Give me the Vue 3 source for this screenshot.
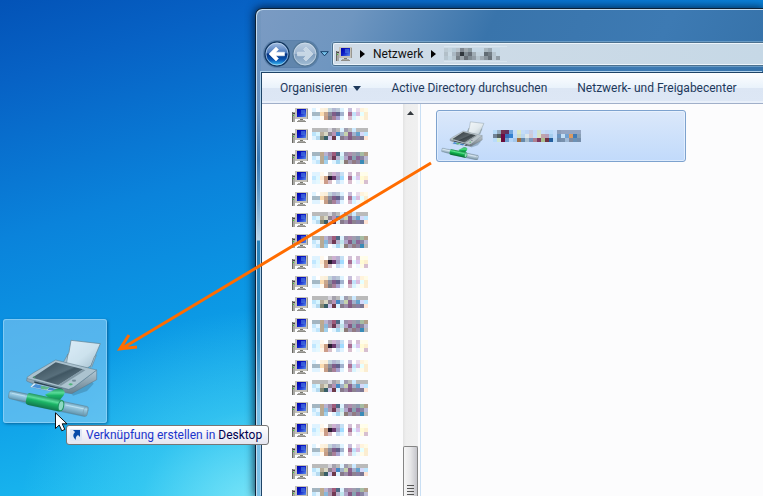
<script setup>
const palettes = [
  {
    top: 4,
    cells: [
      '#dff3ff #ffffff #fcf2df #fbefd9 #c3d5dc #b3b7d2 #b9c6d6 #def3ff #ffffff #c9bedb #ffffff #e8dcec #fff3dc #fffbe6',
      '#a4b8c5 #a5b9c5 #fbdcb0 #c7a78e #8b8c9c #7f5d88 #62628c #a2b2ce #ffffff #ab7398 #c3e2fa #dabde0 #e6ffff #fcedcf',
      '#dff3ff #e0f3ff #fffaf1 #c69d86 #817d82 #a88099 #a7a3d0 #dff3ff #ffffff #d7b9cb #d9f5ff #f3f9fa #fffbe7 #fbedd2'
    ]
  },
  {
    top: 3,
    cells: [
      '#bababa #bababa #bababa #bababa #d6d4dc #a4a1ac #bababa #dff3ff #a09dae #bababa #cbe9ff #bababa #bababa #bababa',
      '#bbe4fb #d7f5ff #b8ae9b #d8d7c4 #8c8290 #b893b4 #4589c5 #a2b3cb #c6d2ac #8b6390 #a3b1cc #64a1cb #d5d9f9 #bce7ff',
      '#dff3ff #b5daf0 #858a76 #385e66 #d0c7ee #6d3a49 #dff3ff #877a8b #9d8faa #835c83 #8c8290 #8a80a2 #7d7893 #ffe4d3'
    ]
  },
  {
    top: 6,
    cells: [
      '#a4b5c0 #a4b5c0 #bda98f #b8b3d1 #a08cab #9f5b7b #4f6985 #def3ff #9b91ad #ad8fae #a09dae #8d9bae #a6bca3 #b2a08b',
      '#c3e6fb #e5f5ff #b8aa94 #88b8dc #ad96ad #713a55 #b8b4ce #bfe5ec #b1a5ca #845985 #87a2b1 #8c6797 #8985a4 #bab9d4',
      '#dff3ff #c0e5fb #b8aa94 #a2d0ed #ffffff #dff3ff #a4d5f0 #ddf0ed #8c7a77 #a199b0 #927b84 #9187a2 #398bb7 #bababa'
    ]
  },
  {
    top: 5,
    cells: [
      '#dff3ff #dff3ff #fff8ed #ffffff #bab6ba #ceb0d1 #b6afd0 #c6e0f4 #ffffff #d4bfd6 #ffffff #d4bed5 #fffdeb #fffde9',
      '#c0e7ff #dff8ff #ffe9d2 #c89d81 #281c32 #6d3b70 #a09fc6 #a2dcff #ffffff #a96f95 #e2f5ff #dbc5ef #fffbd4 #fdefd0',
      '#dff3ff #e5f8ff #fff6e9 #cd9c89 #d8bdc8 #ffffff #c6dbf2 #dff3ff #ffffff #d9bdce #ffffff #f0f9ff #fffbe5 #d7bfd0'
    ]
  }
]

function toPixels(rows, top) {
  return rows.flatMap((row, y) =>
    row.split(' ').map((fill, x) => ({ x: x * 4, y: top + y * 4, fill }))
  )
}

const hosts = Array.from({ length: 19 }, (_, i) => {
  const p = palettes[i % 4]
  return { id: i, pixels: toPixels(p.cells, p.top) }
})

const deviceLabel = toPixels(
  [
    '#b5daf8 #93aabf #733352 #61335f #6fa6dd #c4ddfb #d9e7c8 #c4dcf8 #bfd6f6 #c8cde2 #c4dcfa #d2e3d0 #c6dcf8 #bfd6f4 #b9dbf9 #c4dcfa #8c9eba #94a5c2 #94a5c2 #94a5c2 #94a5c2 #94a5c2',
    '#708295 #515e60 #6f0c42 #386fb8 #3281d0 #bfdcfb #cddccb #b9d6f1 #dce6ea #d0cad6 #c3defa #d7e3c8 #bfa5a9 #b69fb9 #a5ceef #c4dcfa #6b95c0 #c2def5 #72a2d2 #da9a62 #407bb7 #889fb4',
    '#b9dcfb #d1e8cc #680c3d #6c9cce #b6d6f8 #a4c8eb #a36f42 #6689aa #a9bfd0 #7795bb #ad8090 #80375f #a8bd8c #6f3142 #245f9f #b9d9f6 #748dab #7891ae #a0bad7 #808ba1 #6c91b5 #748dab'
  ],
  0
)

const pathLabel = toPixels(
  [
    '#bdcbd4 #c3d3dd #b8cbd6 #b8c2ca #7e8790 #9fa8ae #8b9aa1 #c5d7e4 #c5d7e4 #c5d7e4 #a9b7bf #9ba9b3 #c5d7e4 #c5d7e4',
    '#b2bfc8 #cad9e3 #aab8c3 #8a9299 #30373c #7e8a91 #666e77 #9facb4 #c1d1dc #c3d3df #616c74 #727d85 #b5c4ce #c5d7e4',
    '#b7c6d0 #c2d3de #b5c4cd #788188 #9aa3a9 #666d74 #808c93 #929da6 #b5c4cd #a1acb4 #8a959d #68727a #b9c7d1 #909ca5'
  ],
  0
)
</script>

<template>
  <main class="desktop">
    <svg class="defs" width="0" height="0" aria-hidden="true">
      <defs>
        <linearGradient id="paper" x1="0" y1="0" x2="1" y2="1">
          <stop offset="0" stop-color="#f3f7fa" /><stop offset="0.55" stop-color="#e2eaee" /><stop offset="1" stop-color="#aebdc5" />
        </linearGradient>
        <linearGradient id="lid" x1="0" y1="0" x2="1" y2="1">
          <stop offset="0" stop-color="#2b3236" /><stop offset="0.5" stop-color="#596368" /><stop offset="0.55" stop-color="#3d464b" /><stop offset="1" stop-color="#788287" />
        </linearGradient>
        <linearGradient id="side" x1="0" y1="0" x2="0" y2="1">
          <stop offset="0" stop-color="#c5cdd2" /><stop offset="1" stop-color="#69757d" />
        </linearGradient>
        <linearGradient id="green" x1="0" y1="0" x2="0" y2="1">
          <stop offset="0" stop-color="#168d45" /><stop offset="0.3" stop-color="#5be28b" /><stop offset="0.5" stop-color="#12b44f" /><stop offset="1" stop-color="#066b31" />
        </linearGradient>
        <linearGradient id="glass" x1="0" y1="0" x2="0" y2="1">
          <stop offset="0" stop-color="#81959d" /><stop offset="0.3" stop-color="#d6e5ea" /><stop offset="0.65" stop-color="#9eb4bd" /><stop offset="1" stop-color="#6e848e" />
        </linearGradient>
        <linearGradient id="screen" x1="0" y1="0" x2="1" y2="1">
          <stop offset="0" stop-color="#0000a8" /><stop offset="0.5" stop-color="#1021c8" /><stop offset="1" stop-color="#5d91ee" />
        </linearGradient>
        <linearGradient id="orb" x1="0" y1="0" x2="0" y2="1">
          <stop offset="0" stop-color="#a9c2e4" /><stop offset="0.45" stop-color="#4a78bc" /><stop offset="0.5" stop-color="#06327f" /><stop offset="0.75" stop-color="#0b58b4" /><stop offset="1" stop-color="#45d1ff" />
        </linearGradient>
        <linearGradient id="orb-off" x1="0" y1="0" x2="0" y2="1">
          <stop offset="0" stop-color="#bfd0e2" /><stop offset="0.48" stop-color="#9db5cf" /><stop offset="0.52" stop-color="#7f9dbd" /><stop offset="1" stop-color="#a4bfd6" />
        </linearGradient>
        <symbol id="printer" viewBox="10 28 312 312">
          <path d="M215 250 275 214 282 222 262 244 220 258Z" fill="#23495c" opacity="0.3" />
          <path d="M196 162 205 134 208 128 214 92 302 102 274 168 263 175Z" fill="url(#paper)" stroke="#64777f" stroke-width="2" />
          <path d="M192 156 205 133 201 160M272 174 284 141 290 137 276 173" fill="#b4c1c8" stroke="#65757d" stroke-width="1.5" />
          <path d="M82 205 206 239 222 233 291 181 291 210 216 252 190 248 110 227 81 214Z" fill="url(#side)" stroke="#5b6972" stroke-width="1.5" />
          <path d="M168 151 291 181 222 233 207 239 84 207 82 203 100 190Z" fill="#bbc5ca" stroke="#5b6a73" stroke-width="1.5" />
          <path d="M168 158 250 179 176 226 98 204Z" fill="url(#lid)" />
          <path d="M250 179 176 226 184 228 257 182Z" fill="#899399" />
          <path d="M104 215 188 237 190 248 104 226Z" fill="#202d34" />
          <path d="M103 220 187 240 170 248 91 232Z" fill="#eff7fc" stroke="#668193" />
          <path d="M108 223 145 232 132 239 97 232Z" fill="#478bd4" />
          <path d="M123 228 151 233 140 240 124 237Z" fill="#61b879" />
          <path d="M150 233 177 240 166 245 143 240Z" fill="#407ebf" />
          <ellipse cx="223" cy="213" rx="7" ry="4" fill="#77858c" stroke="#dce4e7" />
          <ellipse cx="213" cy="224" rx="6" ry="4" fill="#51ae69" stroke="#dce4e7" />
          <circle cx="104" cy="203" r="3" fill="#4d8d5f" />
        </symbol>
        <symbol id="pipe" viewBox="10 28 312 312">
          <path d="M33 267 95 289 255 322 267 302 180 284Z" fill="#16445c" opacity="0.2" />
          <path d="M136 255 167 239Q190 232 195 248Q194 258 181 270L164 278Z" fill="url(#green)" />
          <g transform="rotate(12 150 280)">
            <rect x="25" y="268" width="66" height="24" rx="6" fill="url(#glass)" fill-opacity="0.7" stroke="#60757f" stroke-width="1.5" />
            <rect x="184" y="267" width="83" height="30" rx="6" fill="url(#glass)" fill-opacity="0.7" stroke="#60757f" stroke-width="1.5" />
            <rect x="79" y="263" width="112" height="36" rx="9" fill="url(#green)" />
            <ellipse cx="185" cy="281" rx="8" ry="15" fill="#96dfbc" stroke="#148c48" stroke-width="3" />
            <path d="M199 276H257M34 275H73" stroke="#edf6f9" stroke-width="2" opacity="0.7" />
            <ellipse cx="260" cy="282" rx="6" ry="14" fill="none" stroke="#7b929d" stroke-width="1.5" />
          </g>
        </symbol>
        <symbol id="host" viewBox="0 0 16 16">
          <rect x="0" y="5" width="3" height="10" fill="#a8a8a4" />
          <rect x="0" y="5" width="1" height="10" fill="#686864" />
          <rect x="1" y="6" width="2" height="1" fill="#454545" />
          <rect x="1" y="8" width="1" height="1" fill="#38d52d" />
          <rect x="3" y="1" width="13" height="11" fill="#c4c2ba" />
          <rect x="15" y="2" width="1" height="10" fill="#989790" />
          <rect x="5" y="2" width="9" height="8" fill="url(#screen)" />
          <path d="M9 3H13V7H9Z" fill="#4b79de" opacity="0.65" />
          <rect x="8" y="12" width="3" height="1" fill="#787870" />
          <rect x="6" y="13" width="7" height="1" fill="#a8a7a2" />
          <rect x="5" y="14" width="9" height="1" fill="#8e8d88" />
        </symbol>
      </defs>
    </svg>

    <section class="window">
      <header class="glass">
        <div class="orbs">
          <button class="orb" type="button" aria-label="Zurück">
            <svg viewBox="0 0 26 26"><circle cx="13" cy="13" r="12" fill="url(#orb)" stroke="#143861" stroke-width="1.5" /><circle cx="13" cy="13" r="11" fill="none" stroke="#c9def2" stroke-opacity="0.65" /><path d="M5 13 12 6 14.5 8.5 11.8 11.2H20.5V14.8H11.8L14.5 17.5 12 20Z" fill="#fff" stroke="#fff" stroke-width="0.5" /></svg>
          </button>
          <button class="orb" type="button" aria-label="Vorwärts">
            <svg viewBox="0 0 26 26"><circle cx="13" cy="13" r="12" fill="url(#orb-off)" stroke="#547898" stroke-width="1.5" /><circle cx="13" cy="13" r="11" fill="none" stroke="#dce8f2" stroke-opacity="0.6" /><path d="M21 13 14 6 11.5 8.5 14.2 11.2H5.5V14.8H14.2L11.5 17.5 14 20Z" fill="#c7d7e5" stroke="#d8e4ee" stroke-width="0.6" /></svg>
          </button>
        </div>
        <button class="history" type="button" aria-label="Verlauf">
          <svg viewBox="0 0 9 6"><path d="M0.7 0.7H8.3L4.5 4.8Z" fill="#78c4ee" stroke="#153f68" /></svg>
        </button>
        <nav class="address" aria-label="Adresse">
          <svg class="host" aria-hidden="true"><use href="#host" /></svg>
          <svg class="chevron" viewBox="0 0 5 8" aria-hidden="true"><path d="M0 0 5 4 0 8Z" fill="#000" /></svg>
          <a class="crumb" href="#">Netzwerk</a>
          <svg class="chevron" viewBox="0 0 5 8" aria-hidden="true"><path d="M0 0 5 4 0 8Z" fill="#000" /></svg>
          <span class="hidden-path">
            <svg class="path-pixels" viewBox="0 0 56 12" shape-rendering="crispEdges" aria-hidden="true">
              <rect v-for="(p, i) in pathLabel" :key="i" :x="p.x" :y="p.y" width="4" height="4" :fill="p.fill" />
            </svg>
          </span>
        </nav>
      </header>

      <div class="client">
        <div class="toolbar">
          <button class="command organise" type="button">
            Organisieren
            <svg class="drop" viewBox="0 0 8 5" aria-hidden="true"><path d="M0 0H8L4 5Z" fill="#1e395b" /></svg>
          </button>
          <button class="command" type="button">Active Directory durchsuchen</button>
          <button class="command" type="button">Netzwerk- und Freigabecenter</button>
        </div>
        <div class="panes">
          <aside class="tree">
            <ul class="hosts">
              <li v-for="h in hosts" :key="h.id" class="host-row">
                <svg class="host" aria-hidden="true"><use href="#host" /></svg>
                <svg class="host-pixels" viewBox="0 0 56 21" shape-rendering="crispEdges" aria-hidden="true">
                  <rect v-for="(p, i) in h.pixels" :key="i" :x="p.x" :y="p.y" width="4" height="4" :fill="p.fill" />
                </svg>
              </li>
            </ul>
            <div class="scroll">
              <svg class="scroll-up" viewBox="0 0 7 4" aria-hidden="true"><path d="M0 4 3.5 0 7 4Z" fill="#33383d" /></svg>
              <div class="thumb"><i></i><i></i><i></i><i></i></div>
            </div>
          </aside>
          <div class="files">
            <div class="file">
              <svg class="file-icon" viewBox="0 0 48 48" aria-hidden="true">
                <use href="#pipe" y="3" width="48" height="48" />
                <use href="#printer" y="0" width="48" height="48" />
              </svg>
              <svg class="file-pixels" viewBox="0 0 88 12" shape-rendering="crispEdges" aria-hidden="true">
                <rect v-for="(p, i) in deviceLabel" :key="i" :x="p.x" :y="p.y" width="4" height="4" :fill="p.fill" />
              </svg>
            </div>
          </div>
        </div>
      </div>
    </section>

    <svg class="arrow" viewBox="0 0 320 196" aria-hidden="true">
      <path d="M316 5 6 191M14 177 5 191 22 189" fill="none" stroke="#ff6c00" stroke-width="3" />
    </svg>

    <div class="drag">
      <svg class="drag-icon" viewBox="0 0 104 104" aria-hidden="true">
        <use href="#printer" width="104" height="104" />
        <use href="#pipe" width="104" height="104" />
      </svg>
    </div>
    <div class="tip" role="status">
      <svg class="shortcut" viewBox="0 0 12 12" aria-hidden="true">
        <rect width="12" height="12" rx="1" fill="#dfe6f4" />
        <path d="M3 1H10V8L8 6Q5 8 6 11Q1 7 5 3Z" fill="#0649a8" />
      </svg>
      <span>Verknüpfung erstellen in <b>Desktop</b></span>
    </div>
    <svg class="cursor" viewBox="0 0 13 20" aria-hidden="true">
      <path d="M0.5 0.8V16.5L4.2 13 6.8 18.8 9.8 17.4 7.2 11.8H12Z" fill="#fff" stroke="#111" />
    </svg>
  </main>
</template>

<style>
body {
  margin: 0;
}
</style>

<style scoped>
.desktop {
  position: relative;
  box-sizing: border-box;
  height: 100vh;
  padding: 8px 0 0 255px;
  overflow: hidden;
  font: 12px/16px Roboto, "Open Sans", sans-serif;
  background:
    radial-gradient(ellipse 240px 200px at 260px 510px, rgba(150, 240, 250, 0.8), rgba(100, 225, 245, 0.35) 50%, transparent),
    linear-gradient(163deg, #0353b7 0, #0762c5 80px, #0a83db 230px, #0c9be6 370px, #1ab8ef 500px, #28c8f2 600px);
}

.defs {
  position: absolute;
}

.window {
  display: flex;
  flex-direction: column;
  box-sizing: border-box;
  height: 100%;
  padding-left: 5px;
  border: solid #0c2136;
  border-width: 1px 0 0 1px;
  border-radius: 7px 0 0 0;
  background:
    linear-gradient(180deg, #7698bf 0, #6791c0 100px, #3878b4 150px, #5b96c6 180px, #b9d5ea 231px, #2b83ba 232px, #2d86bb 330px, #78bde5 400px, #7cc0e6) 0 0 / 5px 100% no-repeat,
    linear-gradient(115deg, #7b9bc3 0, #6f96c0 90px, #3974ab 220px, #3d7ab3 380px, #2a6599);
  box-shadow: inset 1px 1px 0 #c6dcef, 0 0 8px 1px rgba(0, 18, 45, 0.8);
}

.glass {
  display: flex;
  align-items: center;
  height: 28px;
  padding: 31px 0 4px 3px;
}

.orbs {
  display: flex;
  gap: 2px;
  border-radius: 14px;
  background: rgba(40, 78, 115, 0.25);
  box-shadow: 0 0 0 1px rgba(53, 93, 134, 0.4);
}

button {
  padding: 0;
  border: 0;
  background: none;
  font: inherit;
  color: inherit;
}

.orb,
.orb svg {
  display: block;
  width: 26px;
  height: 26px;
}

.history {
  display: flex;
  margin: 0 4px 0 2px;
}

.history svg {
  width: 9px;
  height: 6px;
}

.address {
  display: flex;
  flex: 1;
  align-items: center;
  box-sizing: border-box;
  height: 22px;
  padding-left: 2px;
  border: 1px solid #edf5fb;
  border-right: 0;
  border-radius: 2px 0 0 2px;
  background: linear-gradient(90deg, #d0dce7, #c6d8e6);
  box-shadow: 0 0 0 1px #4c718f, 0 0 0 2px rgba(154, 193, 221, 0.5);
}

.host {
  flex: none;
  width: 16px;
  height: 16px;
}

.chevron {
  width: 5px;
  height: 8px;
  margin: 0 8px;
}

.crumb {
  color: #111;
  text-decoration: none;
}

.hidden-path {
  display: flex;
  align-items: center;
  height: 14px;
  padding-right: 7px;
  border: solid #d8e5ee;
  border-width: 1px 0;
}

.path-pixels {
  width: 56px;
  height: 12px;
}

.client {
  display: flex;
  flex: 1;
  flex-direction: column;
  min-height: 0;
  border: solid #1e4467;
  border-width: 1px 0 0 1px;
  background: #fcfcfd;
  box-shadow: -1px -1px 0 #b0d2ec;
}

.toolbar {
  display: flex;
  flex: none;
  align-items: center;
  gap: 30px;
  height: 30px;
  padding-left: 18px;
  border-bottom: 1px solid #a0afc9;
  background: linear-gradient(#fdfeff, #e9f2fb 15px, #dce6f4 15px, #dde7f5 28px, #e9f0fa 28px);
  color: #1e395b;
  white-space: nowrap;
}

.organise {
  display: flex;
  align-items: center;
  gap: 6px;
}

.drop {
  width: 8px;
  height: 5px;
}

.panes {
  display: flex;
  flex: 1;
  min-height: 0;
}

.tree {
  display: flex;
  flex: none;
  justify-content: space-between;
  width: 158px;
  border-right: 1px solid #c9dff4;
}

.hosts {
  margin: 0;
  padding: 0 0 0 30px;
  list-style: none;
}

.host-row {
  display: flex;
  align-items: center;
  gap: 4px;
  height: 21px;
}

.host-pixels {
  width: 56px;
  height: 21px;
}

.scroll {
  display: flex;
  flex-direction: column;
  align-items: center;
  justify-content: space-between;
  width: 15px;
  margin-right: 2px;
  background: linear-gradient(90deg, #e3e3e3, #eeeeee 3px, #f0f0f0);
}

.scroll-up {
  width: 7px;
  height: 4px;
  margin-top: 7px;
}

.thumb {
  display: flex;
  flex-direction: column;
  align-items: center;
  justify-content: flex-end;
  gap: 2px;
  box-sizing: border-box;
  width: 15px;
  height: 50px;
  padding-bottom: 1px;
  border: 1px solid #858585;
  border-bottom: 0;
  border-radius: 2px 2px 0 0;
  background: linear-gradient(90deg, #f6f6f6, #e6e6e8 50%, #c5c5cb);
}

.thumb i {
  width: 7px;
  height: 1px;
  background: #555;
}

.files {
  flex: 1;
  padding: 6px 15px;
}

.file {
  display: flex;
  align-items: center;
  gap: 6px;
  box-sizing: border-box;
  max-width: 250px;
  height: 52px;
  padding-left: 2px;
  border: 1px solid #7da2ce;
  border-radius: 3px;
  background: linear-gradient(#dbe8fa, #c1dafb);
  box-shadow: inset 0 0 0 1px rgba(240, 247, 255, 0.6);
}

.file-icon {
  width: 48px;
  height: 48px;
}

.file-pixels {
  width: 88px;
  height: 12px;
}

.arrow {
  position: absolute;
  top: 158px;
  left: 115px;
  width: 320px;
  height: 196px;
}

.drag {
  position: absolute;
  top: 319px;
  left: 3px;
  border-radius: 3px;
  background: rgba(145, 206, 244, 0.55);
  box-shadow: inset 0 0 0 1px rgba(160, 219, 250, 0.6), 1px 1px 3px rgba(0, 60, 110, 0.6);
}

.drag-icon {
  display: block;
  width: 104px;
  height: 104px;
  opacity: 0.85;
}

.tip {
  position: absolute;
  top: 425px;
  left: 66px;
  display: flex;
  align-items: center;
  gap: 4px;
  padding: 1px 6px 1px 3px;
  border: 1px solid #767676;
  border-radius: 3px;
  background: linear-gradient(#ffffff, #e4e5f0);
  color: #1c35cc;
  white-space: nowrap;
}

.tip b {
  color: #00004f;
  font-weight: 400;
}

.shortcut {
  width: 12px;
  height: 12px;
}

.cursor {
  position: absolute;
  top: 412px;
  left: 55px;
  width: 13px;
  height: 20px;
}
</style>
